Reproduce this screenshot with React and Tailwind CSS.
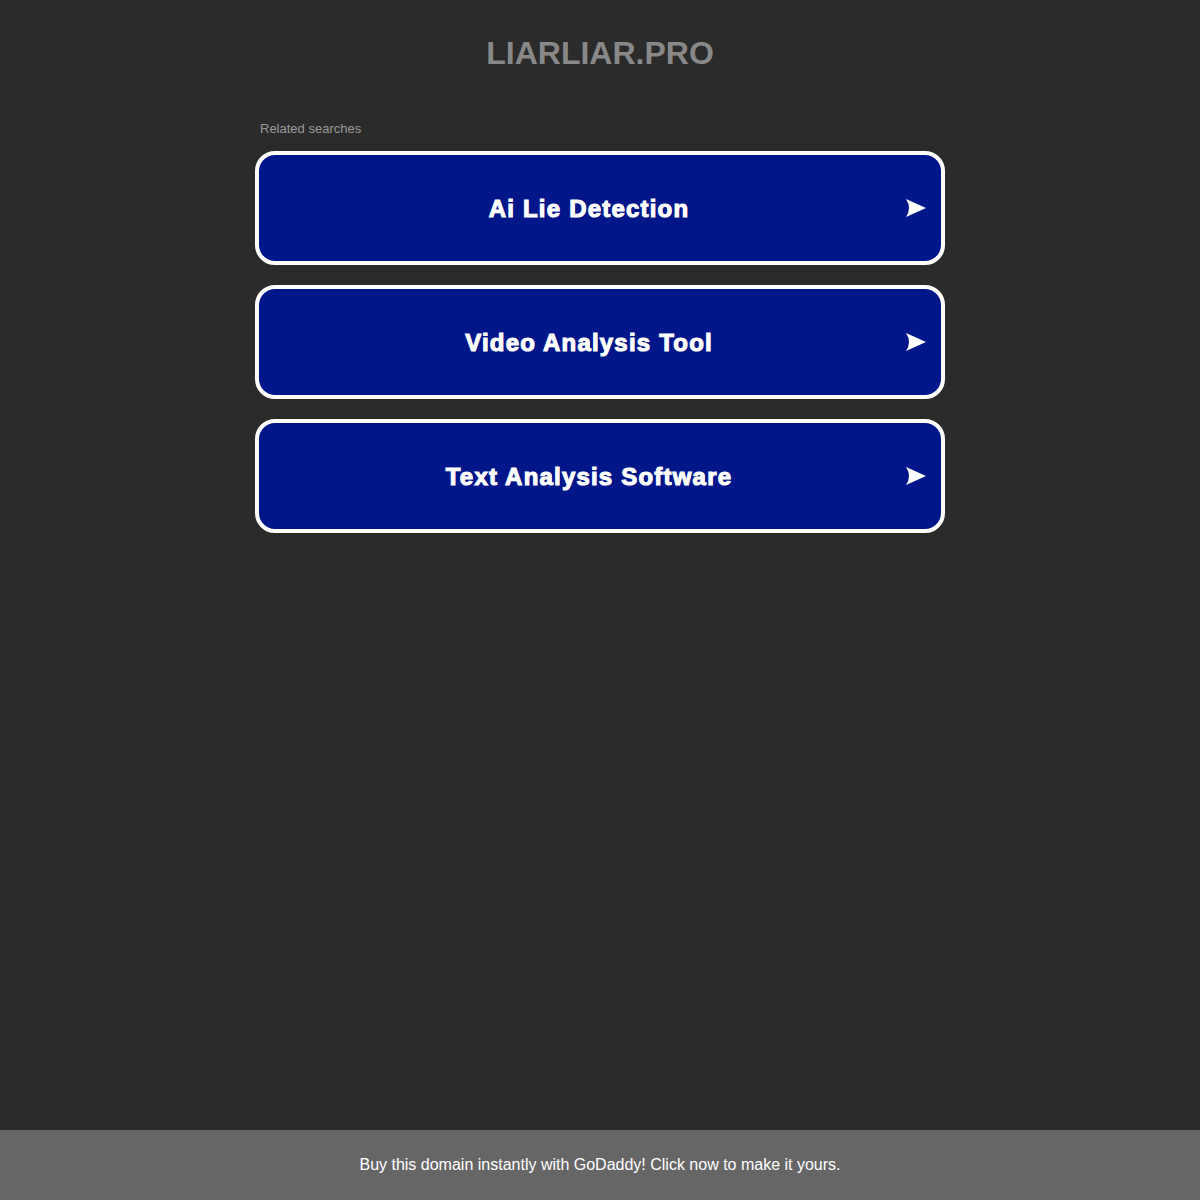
const searches = ["Ai Lie Detection", "Video Analysis Tool", "Text Analysis Software"];

function Arrow() {
  return (
    <svg width="20" height="18" viewBox="0 0 20 18" className="shrink-0">
      <path d="M0 0 L20 9 L0 18 Q6 9 0 0 Z" fill="#ffffff" />
    </svg>
  );
}

export default function App() {
  return (
    <div
      className="min-h-screen flex flex-col bg-[#2b2b2b]"
      style={{ fontFamily: '"Liberation Sans", Arial, sans-serif' }}
    >
      <main className="flex-1 flex flex-col items-center">
        <h1 className="mt-[33px] text-[32px] leading-[40px] font-bold text-[#888888]">
          LIARLIAR.PRO
        </h1>
        <section className="w-[690px] mt-[48px]">
          <p className="pl-[5px] text-[13px] leading-[16px] text-[#9a9a9a]">Related searches</p>
          <div className="mt-[14px] flex flex-col gap-[20px]">
            {searches.map((s) => (
              <a
                key={s}
                href="#"
                className="h-[114px] flex items-center rounded-[20px] border-4 border-white bg-[#011689] pl-[13px] pr-[15px]"
              >
                <span className="flex-1 text-center text-[24px] leading-[28px] font-bold text-white tracking-[1.2px] [-webkit-text-stroke:1.1px_white] translate-y-[1px]">
                  {s}
                </span>
                <Arrow />
              </a>
            ))}
          </div>
        </section>
      </main>
      <footer className="h-[70px] flex items-center justify-center bg-[#666666] text-[16px] text-white">
        Buy this domain instantly with GoDaddy! Click now to make it yours.
      </footer>
    </div>
  );
}
